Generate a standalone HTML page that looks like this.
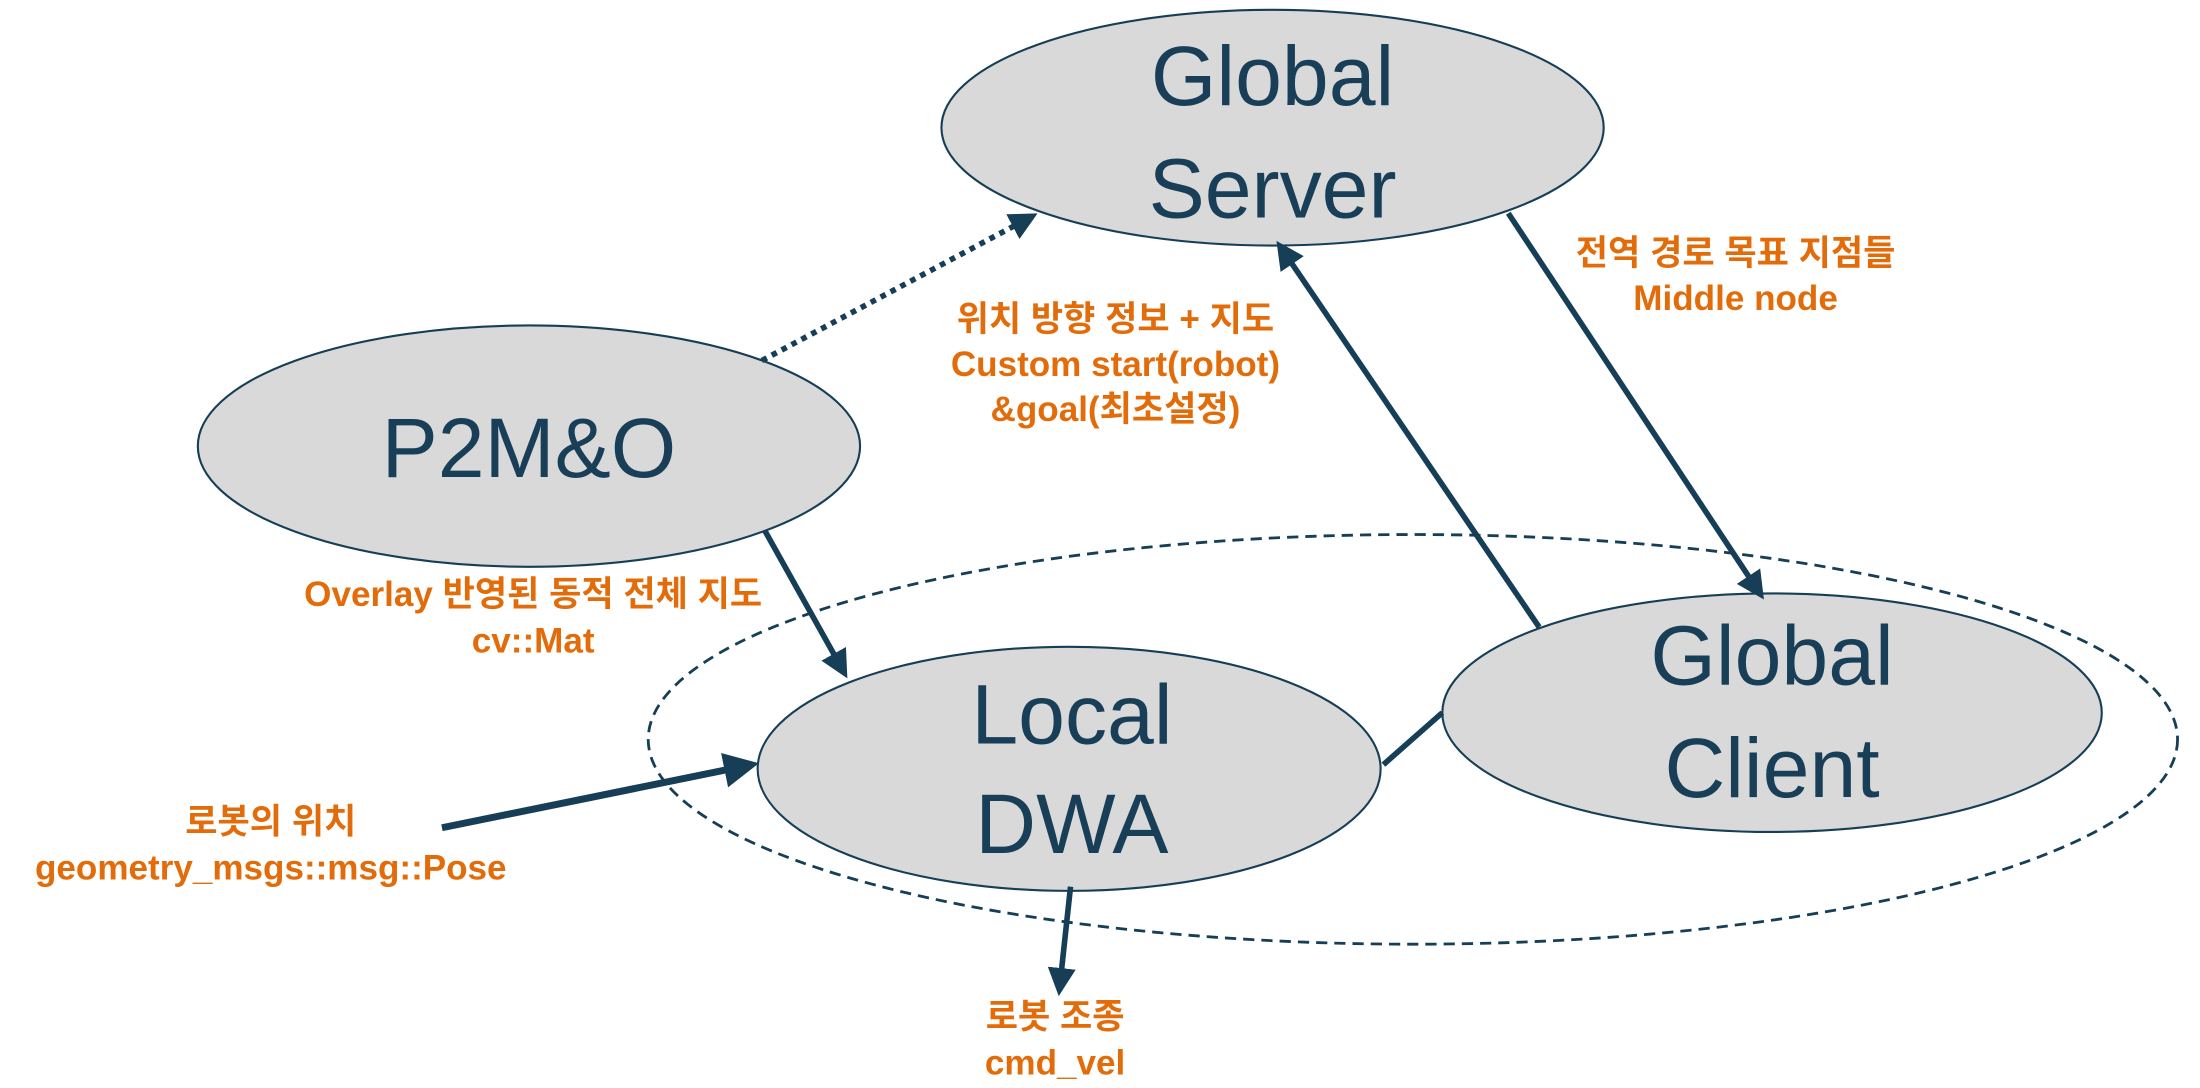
<!DOCTYPE html>
<html><head><meta charset="utf-8"><style>
html,body{margin:0;padding:0;background:#fff;}
svg{display:block;}
.big{font-family:"Liberation Sans","DejaVu Sans",sans-serif;font-size:60px;fill:#183f57;text-anchor:middle;}
.or{font-family:"Liberation Sans","Noto Sans CJK KR",sans-serif;font-size:25px;font-weight:bold;fill:#e36c0a;text-anchor:middle;}
</style></head><body>
<svg width="2200" height="1088" viewBox="0 0 1568 775.5" preserveAspectRatio="none">
<defs>
<marker id="ah" markerWidth="5" markerHeight="5" refX="4" refY="2.5" orient="auto" markerUnits="strokeWidth">
<path d="M0,0 L5,2.5 L0,5 z" fill="#163f57"/></marker>
</defs>
<g fill="#d9d9d9" stroke="#163f57" stroke-width="1.5">
<ellipse cx="907" cy="91" rx="236" ry="84"/>
<ellipse cx="377" cy="318" rx="236" ry="86"/>
<ellipse cx="762" cy="548" rx="222" ry="87"/>
<ellipse cx="1263" cy="508" rx="235" ry="85"/>
</g>
<ellipse cx="1007" cy="527" rx="545" ry="146" fill="none" stroke="#163f57" stroke-width="2" stroke-dasharray="8,5"/>
<g stroke="#163f57" stroke-width="4" fill="none">
<line x1="543" y1="257" x2="736" y2="154" stroke-dasharray="4,4" marker-end="url(#ah)"/>
<line x1="545" y1="378" x2="602" y2="480" marker-end="url(#ah)"/>
<line x1="1097" y1="447" x2="912" y2="175" marker-end="url(#ah)"/>
<line x1="1075" y1="152" x2="1255" y2="424" marker-end="url(#ah)"/>
<line x1="986" y1="545" x2="1028" y2="508"/>
<line x1="315" y1="590" x2="536" y2="545" stroke-width="5" marker-end="url(#ah)"/>
<line x1="763" y1="632" x2="755" y2="706" marker-end="url(#ah)"/>
</g>
<text class="big" x="907" y="75">Global</text>
<text class="big" x="907" y="155">Server</text>
<text class="big" x="377" y="340">P2M&amp;O</text>
<text class="big" x="764" y="530">Local</text>
<text class="big" x="764" y="608">DWA</text>
<text class="big" x="1263" y="488">Global</text>
<text class="big" x="1263" y="568">Client</text>
<text class="or" x="1237" y="189">전역 경로 목표 지점들</text>
<text class="or" x="1237" y="221">Middle node</text>
<text class="or" x="795" y="236">위치 방향 정보 + 지도</text>
<text class="or" x="795" y="268">Custom start(robot)</text>
<text class="or" x="795" y="300">&amp;goal(최초설정)</text>
<text class="or" x="380" y="432">Overlay 반영된 동적 전체 지도</text>
<text class="or" x="380" y="465">cv::Mat</text>
<text class="or" x="193" y="594">로봇의 위치</text>
<text class="or" x="193" y="627">geometry_msgs::msg::Pose</text>
<text class="or" x="752" y="733">로봇 조종</text>
<text class="or" x="752" y="766">cmd_vel</text>
</svg>
</body></html>
